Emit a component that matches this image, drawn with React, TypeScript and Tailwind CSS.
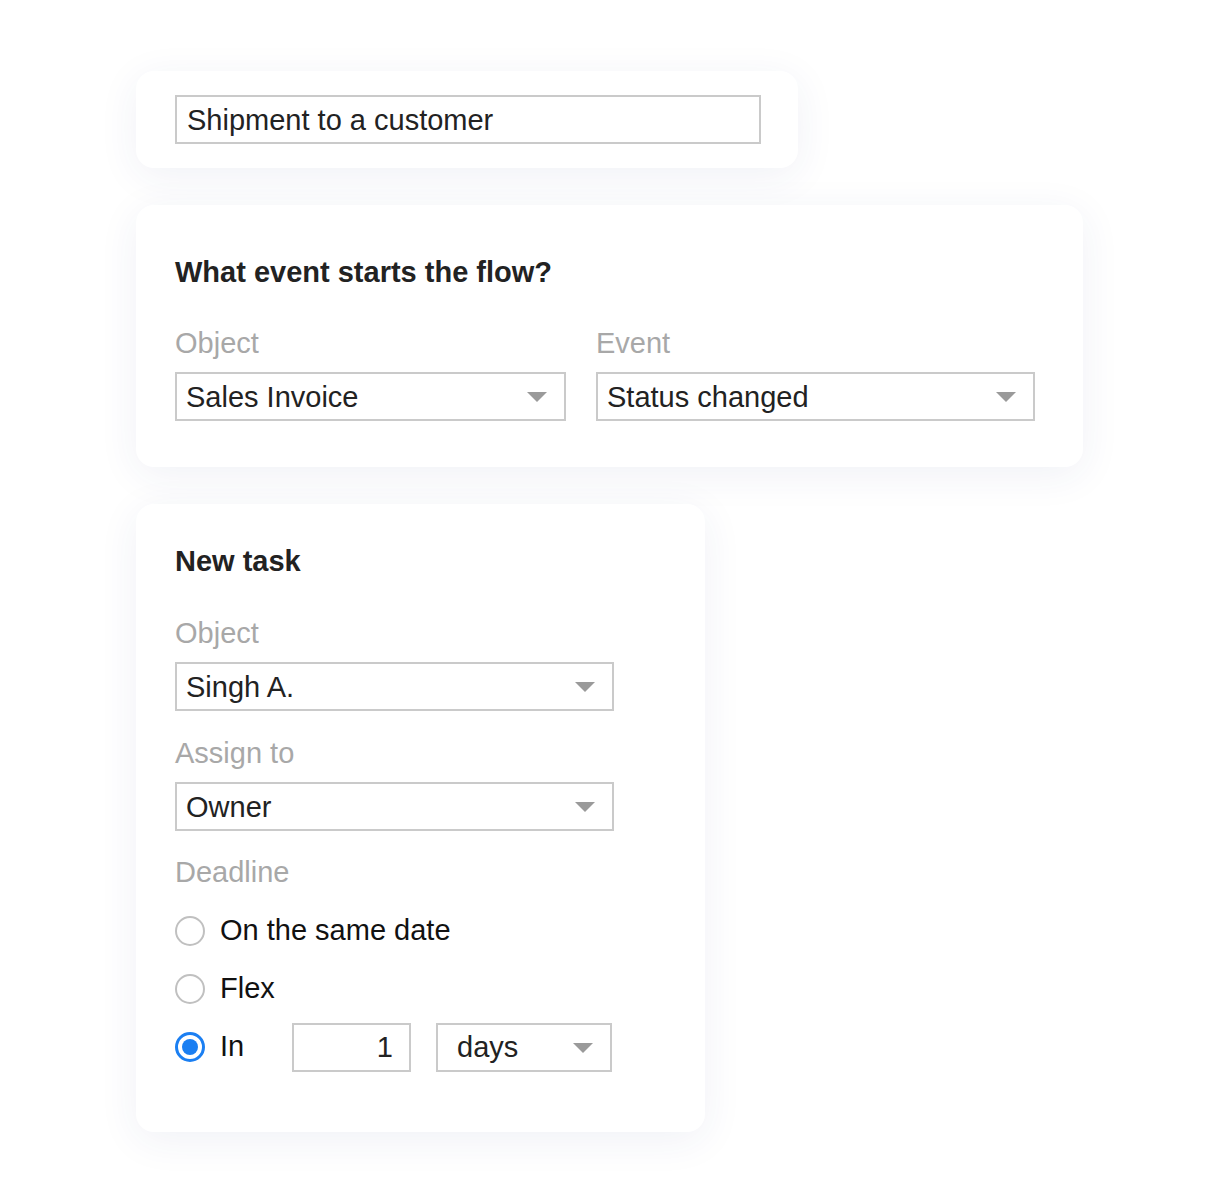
import React from "react";

const Arrow = () => (
  <svg width="20" height="10" viewBox="0 0 20 10" className="shrink-0 mt-[1px]">
    <path d="M0 0 H20 L10 10 Z" fill="#9a9a9a" />
  </svg>
);

function Select({ value, w, pl = "pl-[9px]" }: { value: string; w: string; pl?: string }) {
  return (
    <div
      className={`${w} ${pl} h-[49px] border-2 border-[#cacaca] bg-white flex items-center justify-between pr-[17px] text-[29px] text-[#222]`}
    >
      <span className="pt-[2px]">{value}</span>
      <Arrow />
    </div>
  );
}

function Radio({ checked, label }: { checked?: boolean; label: string }) {
  return (
    <div className="flex items-center">
      {checked ? (
        <div className="w-[30px] h-[30px] rounded-full border-[3px] border-[#1b7ff2] flex items-center justify-center">
          <div className="w-[16px] h-[16px] rounded-full bg-[#1b7ff2]" />
        </div>
      ) : (
        <div className="w-[30px] h-[30px] rounded-full border-2 border-[#c0c0c0]" />
      )}
      <span className="ml-[15px] text-[29px] text-[#111]">{label}</span>
    </div>
  );
}

const card =
  "bg-white rounded-[18px] shadow-[0_8px_40px_rgba(40,50,130,0.07)]";

const label = "text-[29px] text-[#a8a8a8] leading-[30px]";

export default function App() {
  return (
    <div
      className="w-[1220px] h-[1204px] bg-white pl-[136px] pt-[71px]"
      style={{ fontFamily: '"Liberation Sans", Arial, sans-serif' }}
    >
      <div className={`${card} w-[662px] px-[39px] py-[24px]`}>
        <div className="w-[586px] h-[49px] border-2 border-[#cacaca] flex items-center pl-[10px] pt-[2px] text-[29px] text-[#222]">
          Shipment to a customer
        </div>
      </div>

      <div className={`${card} w-[947px] mt-[37px] pl-[39px] pt-[52px] pb-[46px]`}>
        <div className="text-[29px] font-bold text-[#222] leading-[30px]">
          What event starts the flow?
        </div>
        <div className="flex gap-[30px] mt-[41px]">
          <div>
            <div className={`${label} mb-[14px]`}>Object</div>
            <Select value="Sales Invoice" w="w-[391px]" />
          </div>
          <div>
            <div className={`${label} mb-[14px]`}>Event</div>
            <Select value="Status changed" w="w-[439px]" />
          </div>
        </div>
      </div>

      <div className={`${card} w-[569px] mt-[37px] pl-[39px] pt-[42px] pb-[56px]`}>
        <div className="text-[29px] font-bold text-[#222] leading-[30px]">New task</div>
        <div className={`${label} mt-[42px] mb-[14px]`}>Object</div>
        <Select value="Singh A." w="w-[439px]" />
        <div className={`${label} mt-[27px] mb-[14px]`}>Assign to</div>
        <Select value="Owner" w="w-[439px]" />
        <div className={`${label} mt-[26px]`}>Deadline</div>
        <div className="flex flex-col mt-[15px]">
          <div className="h-[58px] flex items-center">
            <Radio label="On the same date" />
          </div>
          <div className="h-[58px] flex items-center">
            <Radio label="Flex" />
          </div>
          <div className="h-[58px] flex items-center">
            <div className="w-[117px]">
              <Radio checked label="In" />
            </div>
            <div className="w-[119px] h-[49px] border-2 border-[#cacaca] flex items-center justify-end pr-[16px] pt-[2px] text-[29px] text-[#222]">
              1
            </div>
            <div className="ml-[25px]">
              <Select value="days" w="w-[176px]" pl="pl-[19px]" />
            </div>
          </div>
        </div>
      </div>
    </div>
  );
}
